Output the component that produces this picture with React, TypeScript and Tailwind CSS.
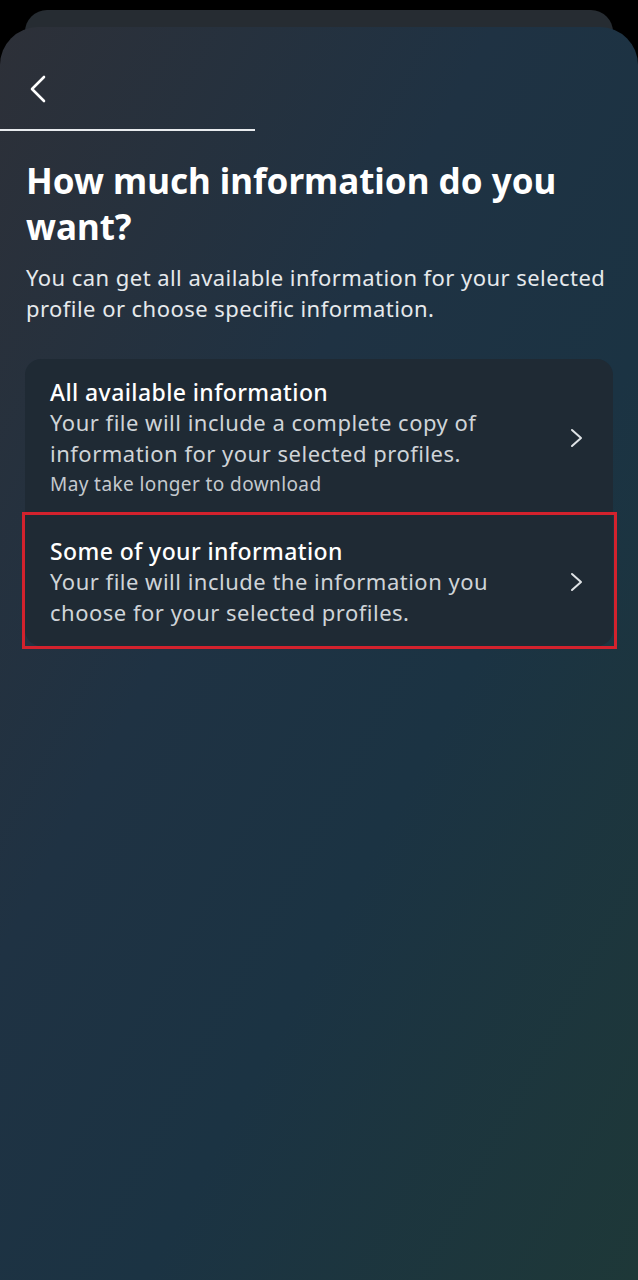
const font = { fontFamily: '"Noto Sans", "Open Sans", sans-serif' };

const options = [
    {
        title: 'All available information',
        desc: 'Your file will include a complete copy of information for your selected profiles.',
        note: 'May take longer to download',
    },
    {
        title: 'Some of your information',
        desc: 'Your file will include the information you choose for your selected profiles.',
        note: null,
        highlighted: true,
    },
];

const Chevron = ({ left }: { left?: boolean }) => (
    <svg width={left ? 18 : 14} height={left ? 28 : 20} viewBox={left ? '0 0 18 28' : '0 0 14 20'} fill="none" stroke="currentColor" strokeWidth={left ? 2.6 : 2} strokeLinecap="round" strokeLinejoin="round">
        {left ? <path d="M15 2 3 14l12 12" /> : <path d="M2 2l9 8-9 8" />}
    </svg>
);

export default function App() {
    return (
        <div className="relative min-h-[1280px] bg-black overflow-hidden" style={font}>
            {/* sheet stacked behind */}
            <div className="absolute left-[25px] right-[25px] top-[10px] h-[80px] rounded-t-[22px] bg-[#262c32]" />

            <div className="relative mt-[27px] h-[1253px] rounded-t-[38px] bg-[linear-gradient(118deg,#2d3038_0%,#1f3243_38%,#1b3343_62%,#1e3838_100%)]">
                <div className="pt-[48px] pl-[29px] text-white">
                    <Chevron left />
                </div>
                <div className="mt-[26px] h-[2px] w-[255px] bg-[#e8ebee]" />

                <div className="px-[26px]">
                    <h1 className="mt-[27px] text-[35px] leading-[46px] font-bold text-white">How much information do you want?</h1>
                    <p className="mt-[12px] text-[22px] leading-[31px] tracking-[0.45px] text-[#e6e9ec]">You can get all available information for your selected profile or choose specific information.</p>
                </div>

                <div className="mx-[25px] mt-[35px] rounded-[16px] bg-[#1f2a34]">
                    {options.map((o) => (
                        <div key={o.title} className={`relative flex items-center gap-4 pl-[25px] pr-[29px] ${o.highlighted ? 'pt-[23px] pb-[18px]' : 'pt-[18px] pb-[14px]'}`}>
                            {o.highlighted && <div className="absolute -left-[3px] -right-[4px] -top-[1px] -bottom-[3px] border-[3px] border-[#d3222d]" />}
                            <div className="flex-1 min-w-0">
                                <p className="text-[23px] leading-[30px] font-medium tracking-[0.4px] text-white">{o.title}</p>
                                <p className="text-[22px] leading-[31px] tracking-[0.5px] text-[#cfd4d8]">{o.desc}</p>
                                {o.note && <p className="text-[19px] leading-[30px] tracking-[0.4px] text-[#c4c9ce]">{o.note}</p>}
                            </div>
                            <span className="text-[#dfe3e6] shrink-0"><Chevron /></span>
                        </div>
                    ))}
                </div>
            </div>
        </div>
    );
}
